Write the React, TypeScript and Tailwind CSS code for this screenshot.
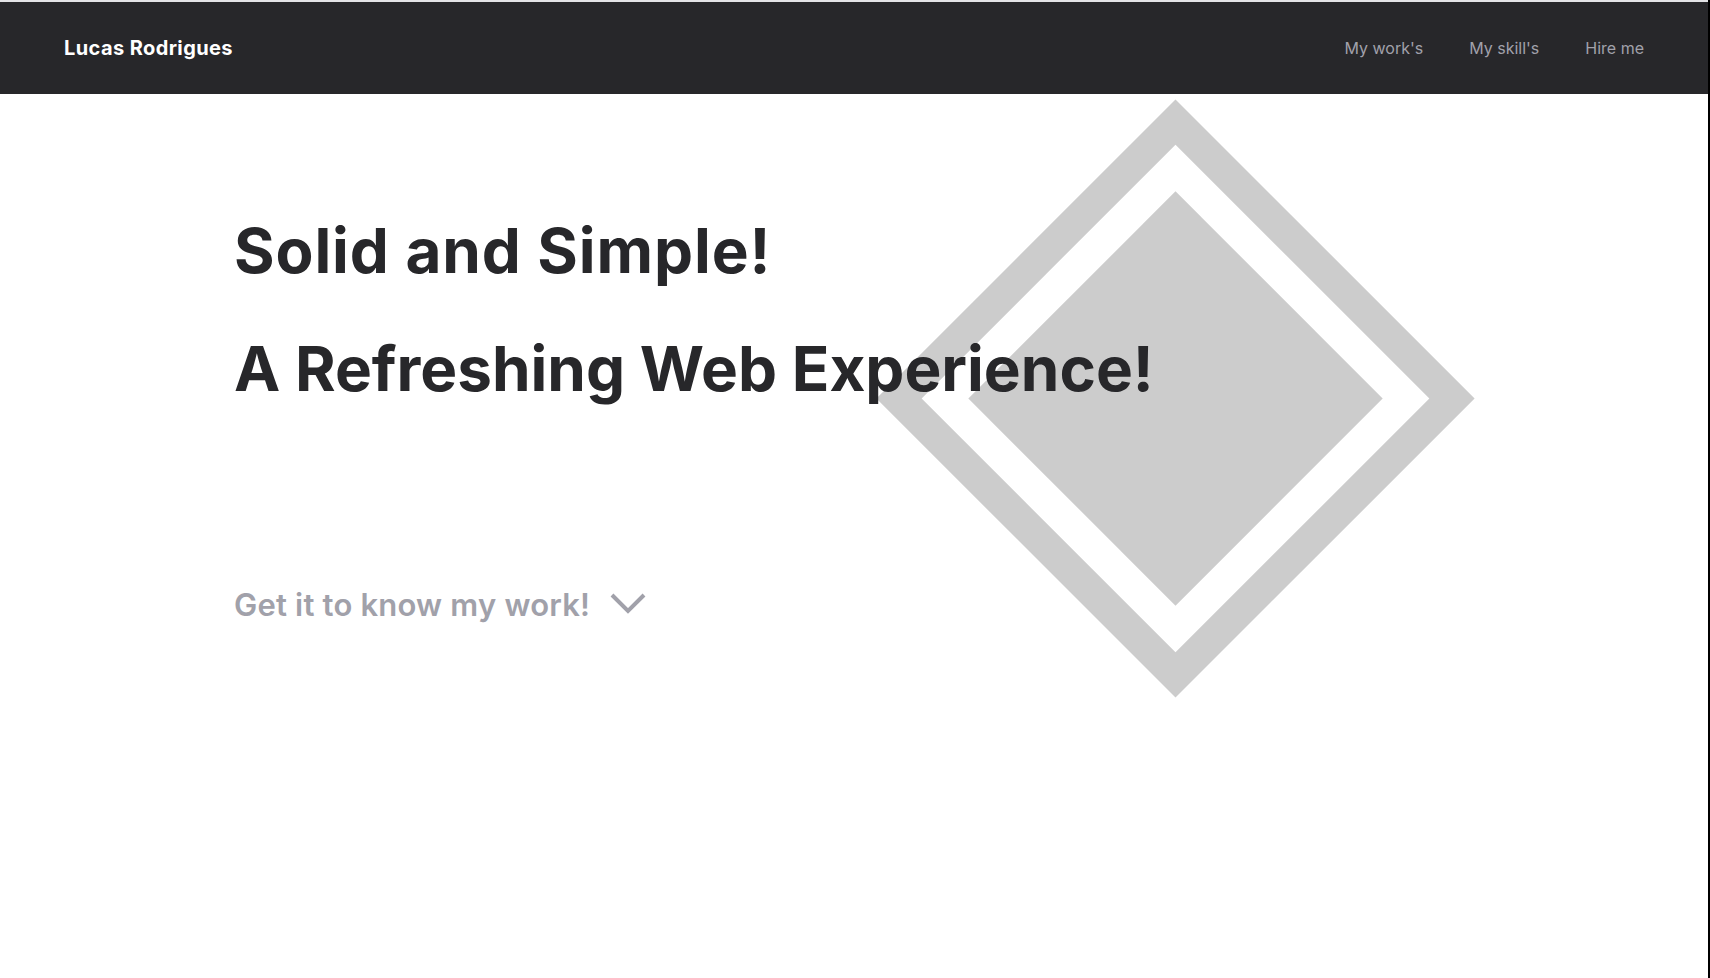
import { useState } from 'react'

const links = ["My work's", "My skill's", 'Hire me']

function Diamond() {
  return (
    <div className="pointer-events-none absolute left-[964px] top-[93px] h-[423px] w-[423px] rotate-45 border-[32px] border-[#cccccc] bg-white p-[33px]">
      <div className="h-full w-full bg-[#cccccc]"></div>
    </div>
  )
}

export default function App() {
  const [active, setActive] = useState<string | null>(null)

  return (
    <div className="min-h-screen overflow-hidden border-r-2 border-black bg-white font-['Inter',sans-serif]">
      <header className="flex h-[94px] items-center justify-between border-t-2 border-[#e4e4e7] bg-[#27272a] px-16">
        <a href="#" className="text-[20px] font-bold tracking-[0.4px] text-white">
          Lucas Rodrigues
        </a>
        <nav className="flex gap-[46px]">
          {links.map((l) => (
            <a
              key={l}
              href="#"
              onClick={() => setActive(l)}
              className={`text-[16px] ${active === l ? 'text-white' : 'text-[#a1a1aa]'} hover:text-white`}
            >
              {l}
            </a>
          ))}
        </nav>
      </header>

      <section className="relative h-[882px]">
        <Diamond />
        <div className="relative z-10 pl-[234px] pt-[109px]">
          <h1 className="text-[62px] font-bold leading-[96px] tracking-[0.9px] text-[#27272a]">Solid and Simple!</h1>
          <h1 className="mt-[22px] text-[62px] font-bold leading-[96px] text-[#27272a]">
            A Refreshing Web Experience!
          </h1>
          <a href="#" className="mt-[164px] flex items-center gap-[20px] text-[31px] font-semibold leading-[48px] tracking-[0.2px] text-[#a1a1aa]">
            <span>Get it to know my work!</span>
            <svg width="36" height="22" viewBox="0 0 36 22" fill="none" className="mt-[-2px]">
              <path d="M2 2 L18 18 L34 2" stroke="#a1a1aa" strokeWidth="4" />
            </svg>
          </a>
        </div>
      </section>
    </div>
  )
}
